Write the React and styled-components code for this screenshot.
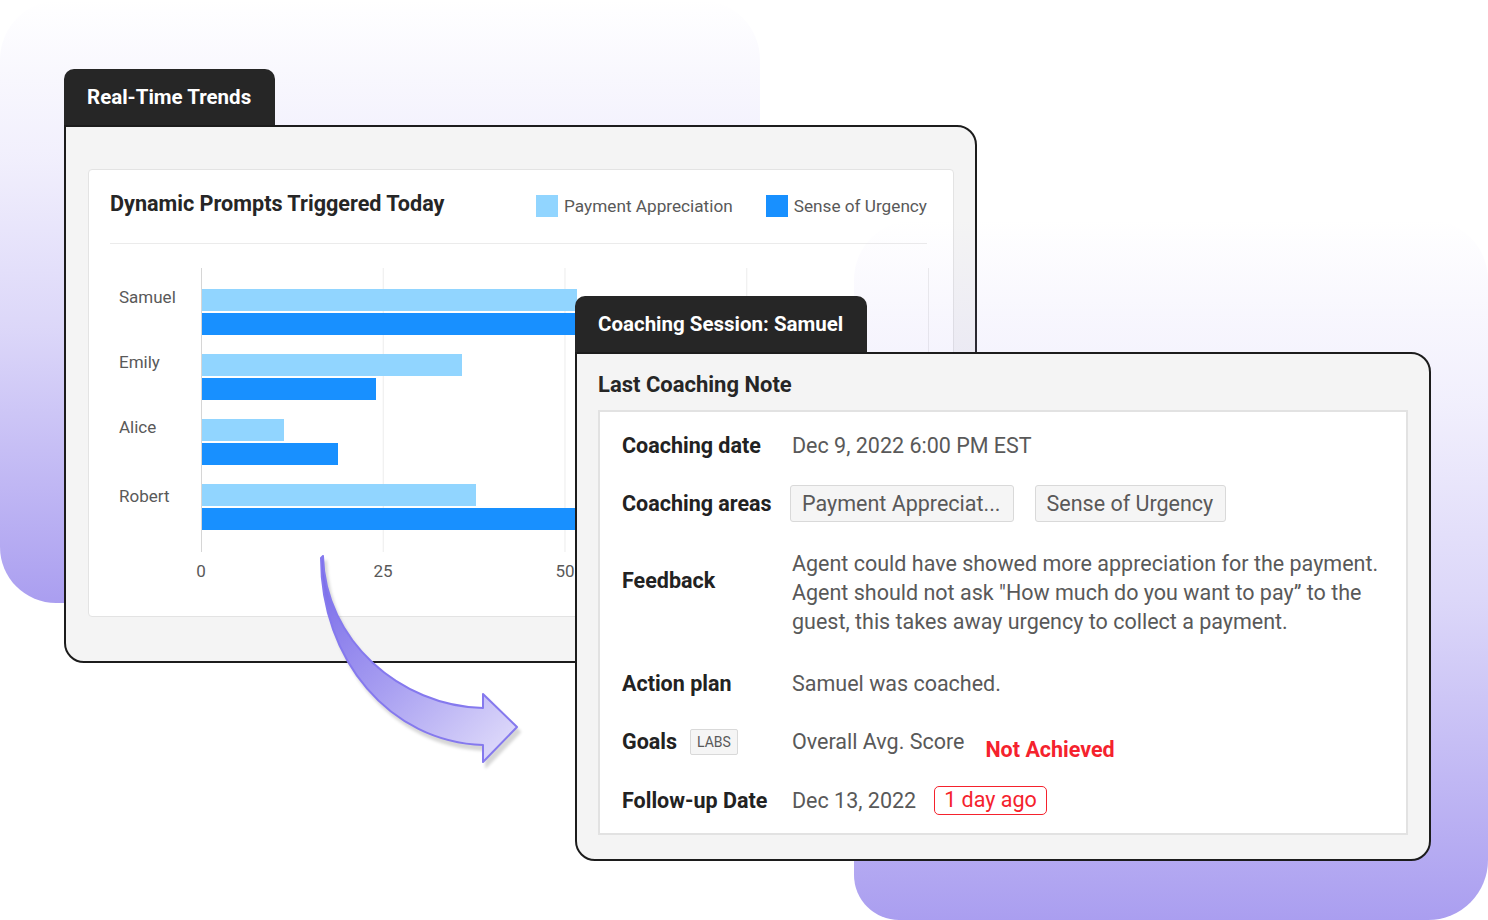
import React from 'react';
import styled, { createGlobalStyle } from 'styled-components';

const GlobalStyle = createGlobalStyle`
  html, body {
    margin: 0;
    padding: 0;
    background: #fff;
  }
  body {
    font-family: Roboto, "Liberation Sans", Arial, sans-serif;
    -webkit-font-smoothing: antialiased;
  }
  * {
    box-sizing: border-box;
  }
`;

const Stage = styled.div`
  position: relative;
  width: 1488px;
  height: 920px;
  overflow: hidden;
  background: #fff;
`;

// soft lavender backdrops behind the windows
const Blob = styled.div`
  position: absolute;
  left: ${(p) => p.$left}px;
  top: ${(p) => p.$top}px;
  width: ${(p) => p.$width}px;
  height: ${(p) => p.$height}px;
  border-radius: ${(p) => p.$radius};
  z-index: ${(p) => p.$z};
  background: linear-gradient(
    180deg,
    rgba(170, 158, 240, 0) 0%,
    rgba(170, 158, 240, 0.16) 26%,
    rgba(170, 158, 240, 0.42) 55%,
    rgba(170, 158, 240, 0.88) 91%,
    rgba(170, 158, 240, 1) 100%
  );
`;

const Window = styled.section`
  position: absolute;
  left: ${(p) => p.$left}px;
  top: ${(p) => p.$top}px;
  width: ${(p) => p.$width}px;
  z-index: ${(p) => p.$z};
  display: flex;
  flex-direction: column;
  align-items: flex-start;
`;

const Tab = styled.div`
  height: 56px;
  padding: 0 24px 0 23px;
  display: flex;
  align-items: center;
  background: #262626;
  color: #fff;
  font-size: 20.5px;
  font-weight: 700;
  border-radius: 10px 10px 0 0;
`;

const Frame = styled.div`
  align-self: stretch;
  background: #f4f4f4;
  border: 2px solid #1c1c1c;
  border-radius: 0 20px 20px 20px;
  padding: ${(p) => p.$pad};
`;

/* ---------- chart window ---------- */

const ChartCard = styled.div`
  background: #fff;
  border: 1px solid #e3e3e3;
  border-radius: 4px;
  padding: 0 26px 35px 21px;
`;

const ChartHeader = styled.div`
  display: flex;
  align-items: center;
  justify-content: space-between;
  padding: 20px 0 25px;
  border-bottom: 1px solid #ebebeb;
`;

const ChartTitle = styled.h2`
  margin: 0;
  font-size: 21.6px;
  line-height: 28px;
  font-weight: 700;
  color: #262626;
`;

const Legend = styled.div`
  display: flex;
  gap: 33px;
  margin-top: 3px;
`;

const LegendItem = styled.div`
  display: flex;
  align-items: center;
  gap: 6px;
  font-size: 17.2px;
  color: #595959;
`;

const Swatch = styled.span`
  width: 22px;
  height: 22px;
  background: ${(p) => p.$color};
`;

const ChartBody = styled.div`
  display: grid;
  grid-template-columns: 91px 728px;
  margin-top: 24px;
`;

const Names = styled.div`
  display: flex;
  flex-direction: column;
  gap: 19px;
  padding: 19px 0 22px 9px;
`;

const Name = styled.div`
  height: 46px;
  padding-top: ${(p) => p.$nudge || 0}px;
  font-size: 17px;
  line-height: 20px;
  color: #595959;
`;

const Plot = styled.div`
  display: flex;
  flex-direction: column;
  gap: 19px;
  padding: 21px 0 22px 1px;
  border-right: 1px solid #ececec;
  background:
    linear-gradient(#d6d6d6, #d6d6d6) 0 0 / 1px 100% no-repeat,
    linear-gradient(to right, #ececec 1px, transparent 1px) 0 0 / 25% 100% repeat-x;
`;

const BarGroup = styled.div`
  display: flex;
  flex-direction: column;
  gap: 2px;
`;

const Bar = styled.div`
  height: 22px;
  background: ${(p) => p.$color};
`;

const Ticks = styled.div`
  grid-column: 2;
  display: grid;
  grid-template-columns: repeat(4, 1fr);
  margin-top: 9px;
`;

const Tick = styled.div`
  width: 0;
  display: flex;
  justify-content: center;
  white-space: nowrap;
  font-size: 17px;
  line-height: 20px;
  color: #595959;
`;

/* ---------- coaching window ---------- */

const NoteTitle = styled.h3`
  margin: 0;
  padding: 18px 0 12px;
  font-size: 22px;
  line-height: 26px;
  font-weight: 700;
  color: #262626;
`;

const NoteBox = styled.div`
  background: #fff;
  border: 2px solid #e2e2e2;
  padding: 20px 22px 18px;
  display: flex;
  flex-direction: column;
`;

const Row = styled.div`
  display: flex;
  align-items: ${(p) => p.$align || 'center'};
  margin-top: ${(p) => p.$mt || 0}px;
`;

const Label = styled.div`
  width: 170px;
  flex-shrink: 0;
  display: flex;
  align-items: center;
  gap: 13px;
  margin-top: ${(p) => p.$offset || 0}px;
  font-size: 21.5px;
  line-height: 28px;
  font-weight: 700;
  color: #222;
`;

const Value = styled.div`
  font-size: 21.5px;
  line-height: ${(p) => p.$lh || 28}px;
  color: #595959;
`;

const Inline = styled.div`
  display: flex;
  align-items: ${(p) => p.$align || 'center'};
  gap: ${(p) => p.$gap}px;
  margin-left: ${(p) => p.$shift || 0}px;
`;

const Chip = styled.span`
  height: 37px;
  padding: 0 12px 0 11px;
  border: 1px solid #d9d9d9;
  border-radius: 3px;
  background: #f5f5f5;
  font-size: 21.5px;
  line-height: 35px;
  color: #595959;
  white-space: nowrap;
`;

const Labs = styled.span`
  height: 26px;
  padding: 0 6px;
  border: 1px solid #d9d9d9;
  border-radius: 2px;
  background: #f5f5f5;
  font-size: 14px;
  font-weight: 400;
  line-height: 24px;
  color: #595959;
`;

const Status = styled.span`
  margin-top: 8px;
  font-size: 21.5px;
  line-height: 28px;
  font-weight: 700;
  color: #f5222d;
`;

const Since = styled.span`
  height: 29px;
  padding: 0 9px;
  border: 1.5px solid #f5222d;
  border-radius: 5px;
  font-size: 21.5px;
  line-height: 26px;
  color: #f5222d;
`;

const ArrowSvg = styled.svg`
  position: absolute;
  left: 300px;
  top: 540px;
  z-index: 3;
  overflow: visible;
  filter: drop-shadow(3px 5px 1.5px rgba(0, 0, 0, 0.16));
`;

const LIGHT = '#91d5ff';
const DARK = '#1890ff';

const agents = [
  { name: 'Samuel', payment: 51.6, urgency: 62, nudge: 0 },
  { name: 'Emily', payment: 35.8, urgency: 23.9, nudge: 0 },
  { name: 'Alice', payment: 11.3, urgency: 18.7, nudge: 0 },
  { name: 'Robert', payment: 37.8, urgency: 66, nudge: 4 },
];

// only the ticks left of the coaching window are visible
const ticks = [0, 25, 50];

function CurvedArrow() {
  return (
    <ArrowSvg width="240" height="240" viewBox="0 0 240 240">
      <defs>
        <linearGradient id="arrowFill" x1="20" y1="20" x2="215" y2="215" gradientUnits="userSpaceOnUse">
          <stop offset="0" stopColor="#7668e8" />
          <stop offset="0.5" stopColor="#a89ff1" />
          <stop offset="1" stopColor="#e2defb" />
        </linearGradient>
      </defs>
      <path
        d="M23 16 C25 100 100 166 183 168 L183 154 L217 187 L183 222 L183 205 C90 202 21 120 21 18 Z"
        fill="url(#arrowFill)"
        stroke="#8579ee"
        strokeWidth="2"
        strokeLinejoin="round"
      />
    </ArrowSvg>
  );
}

function TrendsWindow() {
  return (
    <Window $left={64} $top={69} $width={913} $z={1}>
      <Tab>Real-Time Trends</Tab>
      <Frame $pad="42px 21px 44px 22px">
        <ChartCard>
          <ChartHeader>
            <ChartTitle>Dynamic Prompts Triggered Today</ChartTitle>
            <Legend>
              <LegendItem>
                <Swatch $color={LIGHT} />
                Payment Appreciation
              </LegendItem>
              <LegendItem>
                <Swatch $color={DARK} />
                Sense of Urgency
              </LegendItem>
            </Legend>
          </ChartHeader>
          <ChartBody>
            <Names>
              {agents.map((a) => (
                <Name key={a.name} $nudge={a.nudge}>{a.name}</Name>
              ))}
            </Names>
            <Plot>
              {agents.map((a) => (
                <BarGroup key={a.name}>
                  <Bar $color={LIGHT} style={{ width: `${a.payment}%` }} />
                  <Bar $color={DARK} style={{ width: `${a.urgency}%` }} />
                </BarGroup>
              ))}
            </Plot>
            <Ticks>
              {ticks.map((t) => (
                <Tick key={t}>{t}</Tick>
              ))}
            </Ticks>
          </ChartBody>
        </ChartCard>
      </Frame>
    </Window>
  );
}

function CoachingWindow() {
  return (
    <Window $left={575} $top={296} $width={856} $z={4}>
      <Tab>Coaching Session: Samuel</Tab>
      <Frame $pad="0 21px 24px 21px">
        <NoteTitle>Last Coaching Note</NoteTitle>
        <NoteBox>
          <Row>
            <Label>Coaching date</Label>
            <Value>Dec 9, 2022 6:00 PM EST</Value>
          </Row>
          <Row $mt={25}>
            <Label>Coaching areas</Label>
            <Inline $gap={21} $shift={-2}>
              <Chip>Payment Appreciat...</Chip>
              <Chip>Sense of Urgency</Chip>
            </Inline>
          </Row>
          <Row $mt={27} $align="flex-start">
            <Label $offset={18}>Feedback</Label>
            <Value $lh={29}>
              Agent could have showed more appreciation for the payment.
              <br />
              Agent should not ask &quot;How much do you want to pay” to the
              <br />
              guest, this takes away urgency to collect a payment.
            </Value>
          </Row>
          <Row $mt={34}>
            <Label>Action plan</Label>
            <Value>Samuel was coached.</Value>
          </Row>
          <Row $mt={30} $align="flex-start">
            <Label>
              Goals
              <Labs>LABS</Labs>
            </Label>
            <Inline $gap={21} $align="flex-start">
              <Value>Overall Avg. Score</Value>
              <Status>Not Achieved</Status>
            </Inline>
          </Row>
          <Row $mt={22}>
            <Label>Follow-up Date</Label>
            <Inline $gap={18}>
              <Value>Dec 13, 2022</Value>
              <Since>1 day ago</Since>
            </Inline>
          </Row>
        </NoteBox>
      </Frame>
    </Window>
  );
}

function App() {
  return (
    <>
      <GlobalStyle />
      <Stage>
        <Blob $left={0} $top={0} $width={760} $height={603} $radius="60px 60px 60px 56px" $z={0} />
        <TrendsWindow />
        <Blob $left={854} $top={220} $width={634} $height={700} $radius="60px 60px 60px 45px" $z={2} />
        <CurvedArrow />
        <CoachingWindow />
      </Stage>
    </>
  );
}

export default App;
